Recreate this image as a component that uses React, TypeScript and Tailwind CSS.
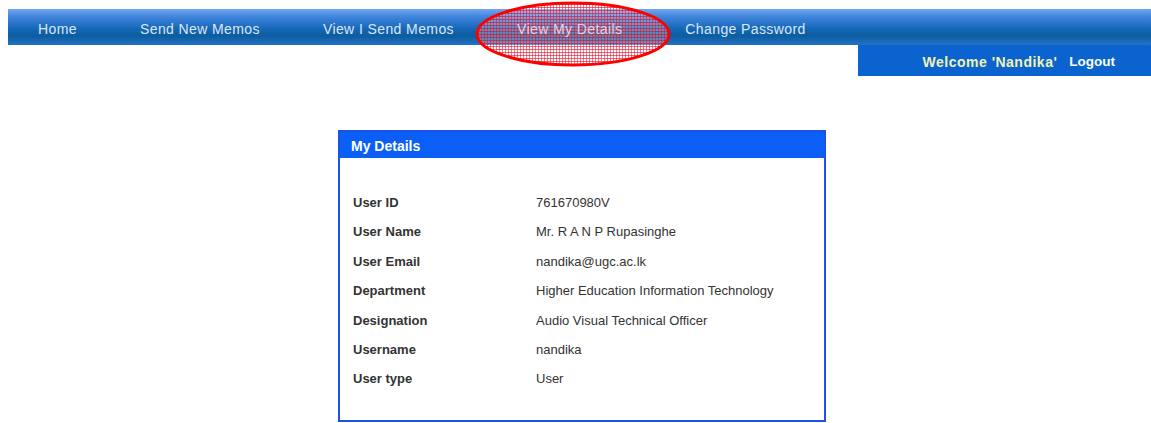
import React from 'react';

const menu = ['Home', 'Send New Memos', 'View I Send Memos', 'View My Details', 'Change Password'];

const details: [string, string][] = [
  ['User ID', '761670980V'],
  ['User Name', 'Mr. R A N P Rupasinghe'],
  ['User Email', 'nandika@ugc.ac.lk'],
  ['Department', 'Higher Education Information Technology'],
  ['Designation', 'Audio Visual Technical Officer'],
  ['Username', 'nandika'],
  ['User type', 'User'],
];

// red marker ring drawn over the current menu item
const Highlight: React.FC = () => (
  <svg className="absolute left-[475px] top-[1px] pointer-events-none" width="200" height="68" viewBox="0 0 200 68">
    <defs>
      <pattern id="hatch" width="3" height="3" patternUnits="userSpaceOnUse">
        <rect width="3" height="3" fill="rgba(255,235,240,0.3)" />
        <rect width="3" height="1" fill="rgba(225,10,40,0.6)" />
        <rect width="1" height="3" fill="rgba(225,10,40,0.5)" />
      </pattern>
    </defs>
    <ellipse cx="98" cy="33" rx="96" ry="31" fill="url(#hatch)" stroke="#f00" strokeWidth="3" />
  </svg>
);

const App: React.FC = () => {
  return (
    <div className="min-h-screen bg-white font-['Liberation_Sans',Arial,sans-serif] relative">
      {/* Top menu */}
      <div className="pt-[9px] pl-2">
        <div className="h-9 pt-1 flex items-center pl-[30px] gap-[63px] text-[14px] tracking-[0.4px] text-[#dbe7f5] bg-[linear-gradient(to_bottom,#72a4f4_0%,#3f84dc_22%,#1567b8_55%,#0c5c9e_75%,#2473c9_100%)]">
          {menu.map((m) => (
            <span key={m} className={m === 'View My Details' ? 'relative z-10 text-[#ecd0dc]' : ''}>{m}</span>
          ))}
        </div>
        <div className="flex justify-end">
          <div className="w-[293px] h-[31px] pt-1 bg-[#0a63cf] flex items-center justify-end pr-[36px] gap-3 text-[14px] font-bold">
            <span className="text-[#f2f2b5] tracking-[0.5px]">Welcome 'Nandika'</span>
            <span className="text-white text-[13.5px]">Logout</span>
          </div>
        </div>
      </div>
      <Highlight />

      {/* Details card */}
      <div className="flex justify-center pt-[54px] pl-[13px]">
        <div className="w-[488px] h-[292px] border-2 border-[#1d52e8]">
          <div className="h-[26px] pt-[2px] bg-[#0b5ff6] text-white font-bold text-[14px] pl-[11px] flex items-center">
            My Details
          </div>
          <div className="pt-[30px] pl-[13px] text-[13px] text-[#333]">
            {details.map(([k, v]) => (
              <div key={k} className="flex h-[29.4px] items-center">
                <span className="w-[183px] font-bold">{k}</span>
                <span>{v}</span>
              </div>
            ))}
          </div>
        </div>
      </div>
    </div>
  );
};

export default App;
